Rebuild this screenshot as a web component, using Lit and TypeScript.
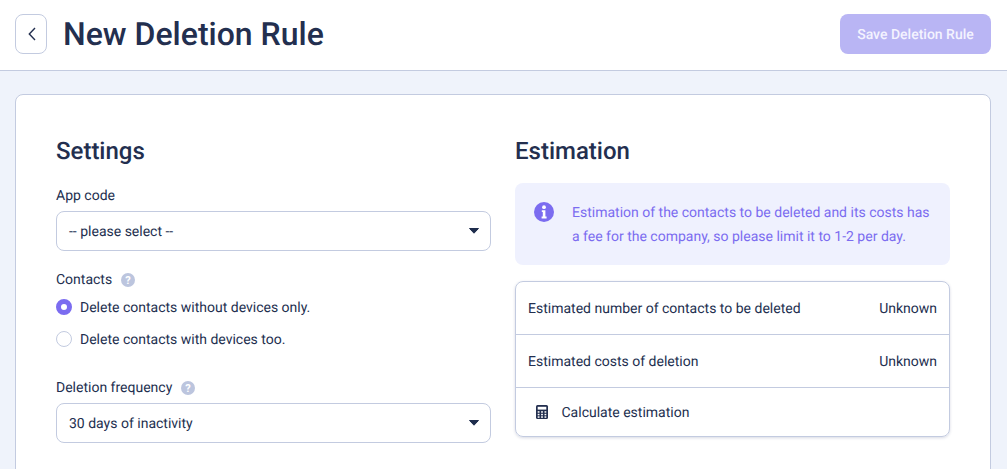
import { LitElement, html, css } from "lit";
import { customElement } from "lit/decorators.js";

const caret = html`<svg class="caret" width="12" height="8" viewBox="0 0 12 8"><path d="M1.5 1.5h9L6 6.2z" fill="#1f2d4d" stroke="#1f2d4d" stroke-width="1" stroke-linejoin="round"/></svg>`;
const help = html`<svg class="help" width="14" height="14" viewBox="0 0 14 14"><circle cx="7" cy="7" r="7" fill="#bcc5de"/><text x="7" y="10.8" text-anchor="middle" font-family="Roboto" font-size="11" font-weight="700" fill="#fff">?</text></svg>`;

@customElement("app-root")
export class AppRoot extends LitElement {
  static styles = css`
    :host { display: block; height: 100vh; overflow: hidden; background: #eff3fb; color: #232f4f; font-family: Roboto, sans-serif; font-size: 14px; text-rendering: geometricPrecision; }
    .top { box-sizing: border-box; height: 71px; background: #fff; border-bottom: 1px solid #c3cbe0; display: flex; align-items: center; padding: 0 16px 2px 15px; }
    .back { box-sizing: border-box; width: 32px; height: 40px; border: 1px solid #c3cbe0; border-radius: 8px; display: flex; align-items: center; justify-content: center; background: #fff; margin-right: 16px; }
    h1 { margin: 0; font-size: 32px; font-weight: 500; flex: 1; line-height: 40px; }
    .save { box-sizing: border-box; width: 151px; height: 40px; border-radius: 8px; background: #b9b5f4; color: #f4f3ff; display: flex; align-items: center; justify-content: center; font-weight: 500; padding-top: 2px; }
    .card { box-sizing: border-box; margin: 23px 16px 0 15px; background: #fff; border: 1px solid #c3cbe0; border-radius: 8px; padding: 41px 40px 40px; display: grid; grid-template-columns: 435px 435px; gap: 24px; height: 420px; }
    h2 { margin: 0; font-size: 24px; font-weight: 500; line-height: 30px; }
    .label { display: flex; align-items: center; gap: 9px; line-height: 20px; }
    .select { box-sizing: border-box; height: 40px; border: 1px solid #c3cbe0; border-radius: 8px; display: flex; align-items: center; justify-content: space-between; padding: 0 10px 0 12px; margin-top: 5px; }
    .select span, .row span, .radio span.t { padding-top: 2px; }
    .f1 { margin-top: 20px; }
    .f2 { margin-top: 19px; }
    .f3 { margin-top: 29px; }
    .radio { display: flex; align-items: center; gap: 8px; height: 20px; margin-top: 12px; }
    .radio.first { margin-top: 7px; }
    .dot { box-sizing: border-box; width: 16px; height: 16px; border-radius: 50%; border: 1px solid #c3cbe0; background: #fff; }
    .dot.on { border: 5px solid #7b6cf0; }
    .info { margin-top: 17px; box-sizing: border-box; height: 82px; border-radius: 8px; background: #eff1fe; color: #7b6cf0; display: flex; align-items: flex-start; padding: 18px 20px 0 19px; gap: 18px; line-height: 24px; }
    .info svg { flex: none; margin-top: 1px; }
    .table { margin-top: 16px; border: 1px solid #c3cbe0; border-radius: 8px; box-shadow: 0 1px 3px rgba(60,70,120,.2); overflow: hidden; }
    .row { box-sizing: border-box; height: 53px; display: flex; align-items: center; justify-content: space-between; padding: 0 12px; border-bottom: 1px solid #c3cbe0; }
    .row.last { border-bottom: 0; height: 48px; justify-content: flex-start; gap: 12.5px; padding-left: 20px; }
  `;
  render() {
    return html`
      <div class="top">
        <div class="back"><svg width="10" height="16" viewBox="0 0 10 16"><path d="M9 2 3.3 8 9 14" fill="none" stroke="#232f4f" stroke-width="1.4"/></svg></div>
        <h1>New Deletion Rule</h1>
        <div class="save">Save Deletion Rule</div>
      </div>
      <div class="card">
        <div>
          <h2>Settings</h2>
          <div class="f1">
            <div class="label">App code</div>
            <div class="select"><span>-- please select --</span>${caret}</div>
          </div>
          <div class="f2">
            <div class="label">Contacts ${help}</div>
            <div class="radio first"><span class="dot on"></span><span class="t">Delete contacts without devices only.</span></div>
            <div class="radio"><span class="dot"></span><span class="t">Delete contacts with devices too.</span></div>
          </div>
          <div class="f3">
            <div class="label">Deletion frequency ${help}</div>
            <div class="select"><span>30 days of inactivity</span>${caret}</div>
          </div>
        </div>
        <div>
          <h2>Estimation</h2>
          <div class="info">
            <svg width="20" height="20" viewBox="0 0 20 20"><circle cx="10" cy="10" r="10" fill="#7b6cf0"/><circle cx="10" cy="5.2" r="1.9" fill="#fff"/><path d="M7.8 8.2h3.6v6.4h1.2v1.8H7.6v-1.8h1.2v-4.6h-1z" fill="#fff"/></svg>
            <div>Estimation of the contacts to be deleted and its costs has<br>a fee for the company, so please limit it to 1-2 per day.</div>
          </div>
          <div class="table">
            <div class="row"><span>Estimated number of contacts to be deleted</span><span>Unknown</span></div>
            <div class="row"><span>Estimated costs of deletion</span><span>Unknown</span></div>
            <div class="row last">
              <svg width="13" height="14" viewBox="0 0 13 14"><rect width="12" height="14" rx="1.5" fill="#232f4f"/><rect x="1.7" y="1.8" width="8.6" height="2.8" fill="#fff"/><g fill="#fff"><rect x="1.7" y="6.2" width="1.8" height="1.5"/><rect x="5.1" y="6.2" width="1.8" height="1.5"/><rect x="8.5" y="6.2" width="1.8" height="1.5"/><rect x="1.7" y="8.8" width="1.8" height="1.5"/><rect x="5.1" y="8.8" width="1.8" height="1.5"/><rect x="8.5" y="8.8" width="1.8" height="1.5"/><rect x="1.7" y="11.3" width="1.8" height="1.5"/><rect x="5.1" y="11.3" width="1.8" height="1.5"/><rect x="8.5" y="11.3" width="1.8" height="1.5"/></g></svg>
              <span>Calculate estimation</span>
            </div>
          </div>
        </div>
      </div>
    `;
  }
}
